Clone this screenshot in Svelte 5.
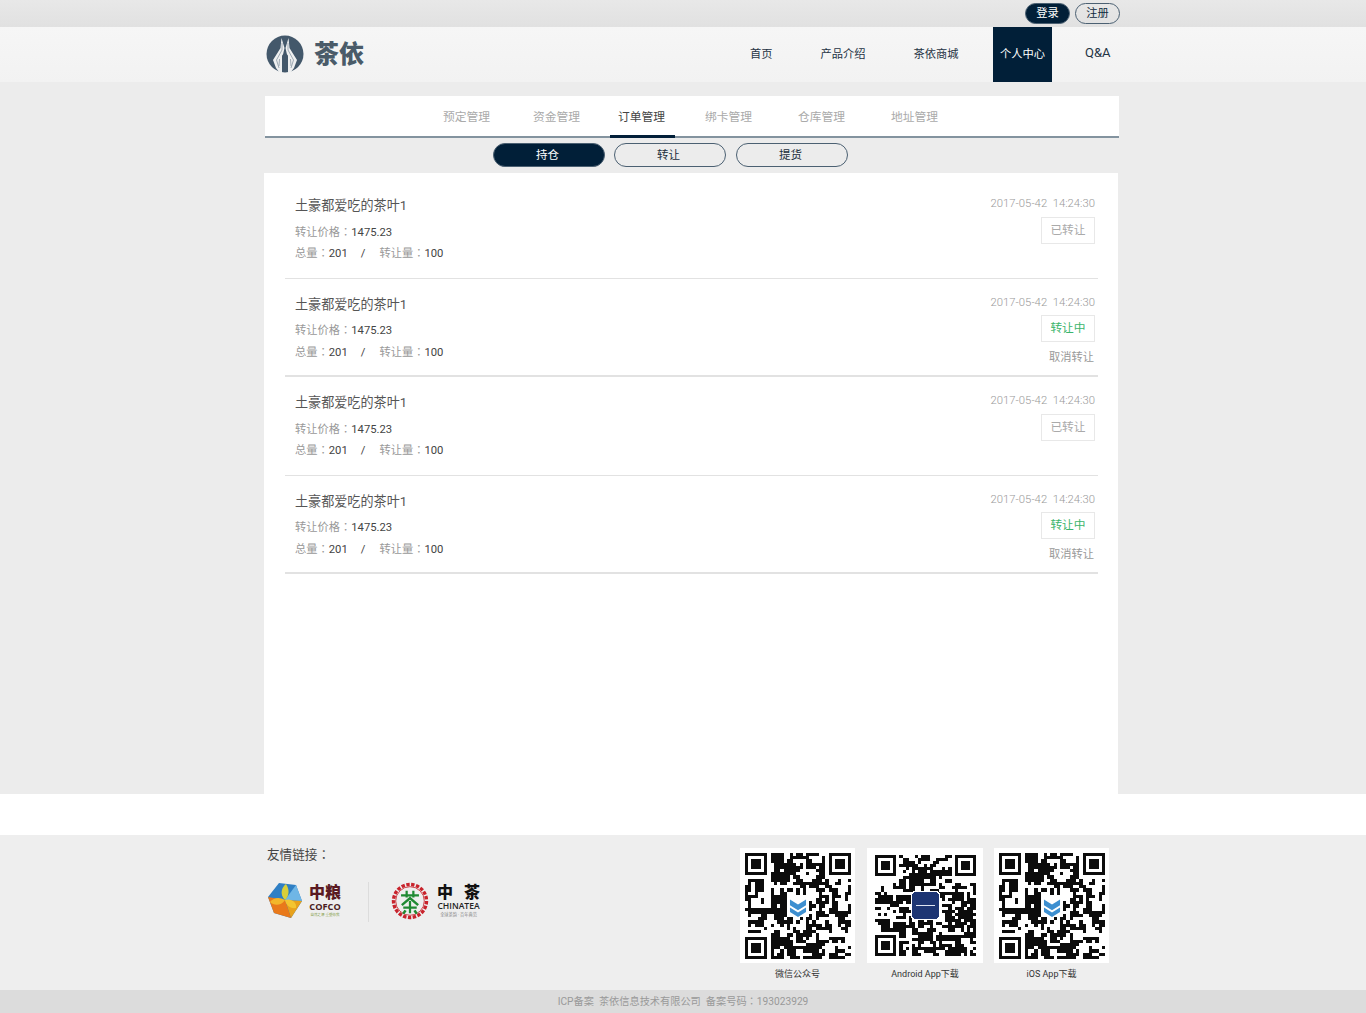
<script lang="ts">
  const navItems = ['首页', '产品介绍', '茶依商城', '个人中心', 'Q&A'];
  const tabs = ['预定管理', '资金管理', '订单管理', '绑卡管理', '仓库管理', '地址管理'];
  const pills = ['持仓', '转让', '提货'];
  const orders = [
    { status: '已转让', active: false },
    { status: '转让中', active: true },
    { status: '已转让', active: false },
    { status: '转让中', active: true }
  ];

  // fake QR pattern: finder squares plus seeded, slightly clumped noise
  function qrPath(seed: number, size = 33): string {
    let s = seed;
    const rnd = () => {
      s = (s * 1664525 + 1013904223) % 4294967296;
      return (s >>> 8) / 16777216;
    };
    const inFinder = (x: number, y: number, ox: number, oy: number) =>
      x >= ox - 1 && x <= ox + 7 && y >= oy - 1 && y <= oy + 7;
    const finderOn = (x: number, y: number, ox: number, oy: number) => {
      const dx = x - ox, dy = y - oy;
      if (dx < 0 || dx > 6 || dy < 0 || dy > 6) return false;
      const edge = dx === 0 || dx === 6 || dy === 0 || dy === 6;
      const core = dx >= 2 && dx <= 4 && dy >= 2 && dy <= 4;
      return edge || core;
    };
    const origins = [[0, 0], [size - 7, 0], [0, size - 7]];
    const grid: boolean[][] = [];
    let d = '';
    for (let y = 0; y < size; y++) {
      grid[y] = [];
      for (let x = 0; x < size; x++) {
        const finder = origins.find(([ox, oy]) => inFinder(x, y, ox, oy));
        let on = false;
        if (finder) {
          on = finderOn(x, y, finder[0], finder[1]);
        } else {
          const left = x > 0 && grid[y][x - 1];
          const up = y > 0 && grid[y - 1][x];
          const p = 0.34 + (left ? 0.22 : 0) + (up ? 0.22 : 0);
          on = rnd() < p;
        }
        grid[y][x] = on;
        if (on) d += `M${x} ${y}h1v1h-1z`;
      }
    }
    return d;
  }

  const qrs = [
    { label: '微信公众号', path: qrPath(11), kind: 'blue', px: 106 },
    { label: 'Android App下载', path: qrPath(29), kind: 'navy', px: 101 },
    { label: 'iOS App下载', path: qrPath(11), kind: 'blue', px: 106 }
  ];
</script>

<div class="top">
  <div class="top-inner">
    <span class="auth solid">登录</span>
    <span class="auth">注册</span>
  </div>
</div>

<header>
  <div class="logo">
    <svg width="38" height="38" viewBox="0 0 38 38">
      <circle cx="19" cy="19" r="18.500" fill="#43586b" />
      <path d="M15.500 3 L14.500 13 L7 25 L10 33 L13 37 L16 37 L16 24 L18.500 13 Z" fill="#eef0f1" />
      <path d="M22.500 3 L23.500 13 L31 25 L28 33 L25 37 L22 37 L22 24 L19.500 13 Z" fill="#eef0f1" />
      <path d="M16 8 L16 15 L10.500 25 L13 33 M22 8 L22 15 L27.500 25 L25 33 M13.500 24 L13 31 M24.500 24 L25 31" fill="none" stroke="#8a98a5" stroke-width="0.8" />
      <rect x="16" y="19" width="6" height="18" rx="2.500" fill="#43586b" />
    </svg>
    <span class="logo-text">茶依</span>
  </div>
  <nav>
    {#each navItems as item}
      <span class="nav-item" class:current={item === '个人中心'}>{item}</span>
    {/each}
  </nav>
</header>

<main>
  <div class="tabs">
    {#each tabs as tab}
      <span class="tab" class:on={tab === '订单管理'}>{tab}</span>
    {/each}
  </div>
  <div class="pills">
    {#each pills as pill, i}
      <span class="pill" class:solid={i === 0}>{pill}</span>
    {/each}
  </div>
  <div class="list">
    {#each orders as order}
      <div class="order">
        <div class="info">
          <div class="name">土豪都爱吃的茶叶1</div>
          <div class="line"><span class="k">转让价格<span class="colon">：</span></span>1475.23</div>
          <div class="line second">
            <span class="k">总量<span class="colon">：</span></span>201<span class="sep">/</span><span class="k">转让量<span class="colon">：</span></span>100
          </div>
        </div>
        <div class="side">
          <div class="date">2017-05-42&nbsp;&nbsp;14:24:30</div>
          <div class="status" class:active={order.active}>{order.status}</div>
          {#if order.active}
            <div class="cancel">取消转让</div>
          {/if}
        </div>
      </div>
    {/each}
  </div>
</main>

<div class="gap"></div>

<footer>
  <div class="links">
    <div class="links-title">友情链接<span class="colon">：</span></div>
    <div class="partners">
      <div class="partner">
        <svg width="36" height="37" viewBox="0 0 36 37">
          <path d="M12 1 L29 3 L35 19 L24 36 L7 31 L1 15 Z" fill="#2f7fc4" />
          <path d="M18 18 L29 3 L35 19 Z" fill="#6fb6e6" />
          <path d="M18 18 L35 19 L24 36 Z" fill="#e8a21c" />
          <path d="M18 18 L24 36 L7 31 L1 15 Z" fill="#e9791a" />
          <path d="M18 18 C12 12 15 5 19 2 C23 8 22 14 18 18 Z" fill="#d9cf3a" />
          <path d="M18 18 C24 16 30 20 29 26 C23 27 19 23 18 18 Z" fill="#f3c531" />
          <path d="M18 18 C14 24 7 24 3 20 C7 15 13 15 18 18 Z" fill="#f2b62a" />
        </svg>
        <div class="brand cofco">
          <b>中粮</b>
          <i>COFCO</i>
          <small>自然之源 重塑你我</small>
        </div>
      </div>
      <div class="divider"></div>
      <div class="partner">
        <svg width="38" height="38" viewBox="0 0 38 38">
          <circle cx="19" cy="19" r="16.500" fill="none" stroke="#c8232c" stroke-width="3.400" stroke-dasharray="3.400 1.500" />
          <circle cx="19" cy="19" r="14.300" fill="none" stroke="#c8232c" stroke-width="0.800" />
          <path transform="translate(19 20) scale(1.120) translate(-19 -20)" d="M11 13h16v2H11z M15 10h2v6h-2z M21 10h2v6h-2z M19 15l8 7-1.400 1.500L19 18l-6.600 5.500L11 22z M13 24h12v2H13z M18 19h2v11h-2z M14 27l2 1-2 3-2-1z M24 27l-2 1 2 3 2-1z" fill="#1f8a33" />
        </svg>
        <div class="brand chinatea">
          <b>中茶</b>
          <i>CHINATEA</i>
          <small>全球茶韵 · 百年典范</small>
        </div>
      </div>
    </div>
  </div>
  <div class="qrs">
    {#each qrs as qr}
      <figure class="qr" class:wide={qr.kind === 'navy'}>
        <div class="qr-box">
          <svg width={qr.px} height={qr.px} viewBox="0 0 33 33" shape-rendering="crispEdges">
            <path d={qr.path} fill="#0c0c0c" />
            {#if qr.kind === 'blue'}
              <rect x="13" y="13" width="7" height="7" fill="#fff" />
              <path d="M14 14.500l2.500 1.500 2.500-1.500v1.800l-2.500 1.500-2.500-1.500z M14 17l2.500 1.500L19 17v1.400l-2.500 1.500-2.500-1.500z" fill="#3d8fd0" shape-rendering="auto" />
            {:else}
              <rect x="12" y="12" width="9" height="9" rx="1" fill="#1d3573" stroke="#fff" stroke-width="0.400" />
              <rect x="13.500" y="16.200" width="6" height="0.600" fill="#dfe5f2" />
            {/if}
          </svg>
        </div>
        <figcaption>{qr.label}</figcaption>
      </figure>
    {/each}
  </div>
</footer>

<div class="copyright">ICP备案&nbsp;&nbsp;茶依信息技术有限公司&nbsp;&nbsp;备案号码<span class="colon">：</span>193023929</div>

<style>
  :global(body) {
    margin: 0;
    background: #fff;
    font-family: Roboto, "Noto Sans CJK SC", sans-serif;
  }
  :global(#app) {
    background: #ececec;
  }
  /* traditional-chinese cut has the colon centred, as in the reference */
  .colon {
    font-family: "Noto Sans CJK TC", sans-serif;
  }
  .top {
    height: 27px;
    background: linear-gradient(#e8e8e8, #e1e1e1);
  }
  .top-inner {
    width: 854px;
    margin-left: 266px;
    height: 27px;
    display: flex;
    justify-content: flex-end;
    align-items: center;
    gap: 5px;
  }
  .auth {
    width: 43px;
    height: 19px;
    border: 1px solid #4b6072;
    border-radius: 11px;
    font-size: 11.25px;
    line-height: 19px;
    text-align: center;
    color: #0f2a40;
  }
  .auth.solid {
    background: #011f38;
    color: #fff;
  }
  header {
    height: 55px;
    background: linear-gradient(#f6f6f6, #f2f2f2);
    display: flex;
    justify-content: space-between;
    padding: 0 248px 0 266px;
  }
  .logo {
    display: flex;
    align-items: center;
    gap: 10px;
  }
  .logo svg {
    margin-top: -2px;
  }
  .logo-text {
    margin-top: -6px;
    font-size: 25px;
    font-weight: 900;
    color: #4a5b69;
  }
  nav {
    display: flex;
    align-items: stretch;
    gap: 33px;
  }
  .nav-item {
    padding: 0 7.5px;
    font-size: 11.25px;
    line-height: 55px;
    color: #1f3344;
  }
  .nav-item:last-child {
    font-size: 13px;
    line-height: 52px;
  }
  .nav-item.current {
    background: #011f38;
    color: #fff;
    padding-left: 7px;
    margin-left: -6px;
    margin-right: -8px;
  }
  main {
    width: 854px;
    margin-left: 264px;
    padding-top: 14px;
  }
  .tabs {
    height: 40px;
    background: #fff;
    border-bottom: 2px solid #83939f;
    display: flex;
    padding-left: 171px;
    margin-left: 1px;
    margin-right: -1px;
  }
  .tab {
    position: relative;
    padding: 0 8px;
    font-size: 11.75px;
    line-height: 43px;
    color: #aaa;
  }
  .tab:first-child { margin-left: -1px; }
  .tab:nth-child(2) { margin-left: 27px; }
  .tab:nth-child(3) { margin-left: 22px; }
  .tab:nth-child(4) { margin-left: 24px; }
  .tab:nth-child(5) { margin-left: 30px; }
  .tab:nth-child(6) { margin-left: 30px; }
  .tab.on {
    color: #444;
  }
  .tab.on::after {
    content: "";
    position: absolute;
    left: 0;
    right: -2px;
    bottom: -2px;
    height: 3px;
    background: #011f38;
  }
  .pills {
    display: flex;
    gap: 9px;
    padding: 5px 0 6px 229px;
  }
  .pill {
    box-sizing: border-box;
    width: 112px;
    height: 24px;
    padding-right: 3px;
    border: 1px solid #4b6072;
    border-radius: 12px;
    font-size: 11.5px;
    line-height: 22px;
    text-align: center;
    color: #1d2f3e;
  }
  .pill:last-child {
    margin-left: 1px;
  }
  .pill.solid {
    background: #011f38;
    color: #fff;
  }
  .list {
    background: #fff;
    height: 614px;
    padding: 7px 20px 0 21px;
  }
  .order {
    box-sizing: border-box;
    height: 98.5px;
    border-bottom: 1px solid #e2e2e2;
    padding: 0 3px 0 10px;
    display: flex;
    justify-content: space-between;
  }
  .order:nth-child(even) {
    border-bottom-width: 2px;
  }
  .name {
    margin-top: 16px;
    font-size: 13.1px;
    line-height: 20px;
    color: #555;
  }
  .line {
    font-size: 11.25px;
    line-height: 21px;
    color: #444;
  }
  .line:nth-child(2) {
    margin-top: 4.5px;
  }
  .line.second {
    margin-top: -0.5px;
  }
  .k {
    color: #999;
  }
  .sep {
    margin: 0 14px 0 13px;
  }
  .side {
    display: flex;
    flex-direction: column;
    align-items: flex-end;
  }
  .date {
    margin-top: 14px;
    font-size: 11.3px;
    font-weight: 300;
    line-height: 20px;
    color: #999;
  }
  .status {
    box-sizing: border-box;
    width: 54px;
    height: 27px;
    margin-top: 2.6px;
    border: 1px solid #e8e8e8;
    font-size: 11.75px;
    line-height: 25px;
    text-align: center;
    color: #aaa;
  }
  .status.active {
    color: #3bb56c;
  }
  .cancel {
    margin-top: 6px;
    margin-right: 1px;
    font-size: 11.25px;
    line-height: 20px;
    color: #999;
  }
  .gap {
    height: 41px;
    background: #fff;
  }
  footer {
    height: 155px;
    background: #eee;
    display: flex;
    padding-left: 267px;
    box-sizing: border-box;
  }
  .links {
    width: 473px;
  }
  .links-title {
    margin-top: 9px;
    font-size: 12.6px;
    line-height: 20px;
    color: #444;
  }
  .partners {
    margin-top: 17px;
    display: flex;
    align-items: flex-start;
  }
  .partner {
    display: flex;
    align-items: flex-start;
    gap: 8px;
  }
  .divider {
    width: 1px;
    height: 40px;
    margin: 0 22px 0 27px;
    background: #dcdcdc;
  }
  .brand {
    padding-top: 3px;
    display: flex;
    flex-direction: column;
    align-items: center;
  }
  .brand b {
    font-size: 16px;
    line-height: 16px;
    font-weight: 900;
  }
  .brand i {
    font-family: "Open Sans", sans-serif;
    font-style: normal;
    font-weight: 700;
    line-height: 11px;
  }
  .brand small {
    margin-top: -1px;
    line-height: 8px;
    white-space: nowrap;
  }
  .cofco {
    margin-left: -2px;
  }
  .cofco b { color: #5a1a22; }
  .cofco i { font-size: 9.2px; color: #4a1c22; }
  .cofco small { font-size: 3.5px; color: #7f9a3f; }
  .chinatea b { color: #111; letter-spacing: 11px; margin-right: -11px; }
  .chinatea i { font-size: 8.6px; color: #222; font-weight: 600; }
  .chinatea small { font-size: 4.2px; color: #888; }
  .qrs {
    display: flex;
    gap: 12px;
    padding-top: 13px;
  }
  .qr {
    margin: 0;
    width: 115px;
  }
  .qr.wide {
    width: 116px;
    margin-right: -1px;
  }
  .qr-box {
    height: 115px;
    background: #fff;
    display: flex;
    align-items: center;
    justify-content: center;
  }
  figcaption {
    margin-top: 3px;
    font-size: 9px;
    line-height: 16px;
    text-align: center;
    color: #333;
    white-space: nowrap;
  }
  .copyright {
    height: 23px;
    background: #dcdcdc;
    font-size: 10.2px;
    line-height: 22px;
    text-align: center;
    color: #999;
  }
</style>
